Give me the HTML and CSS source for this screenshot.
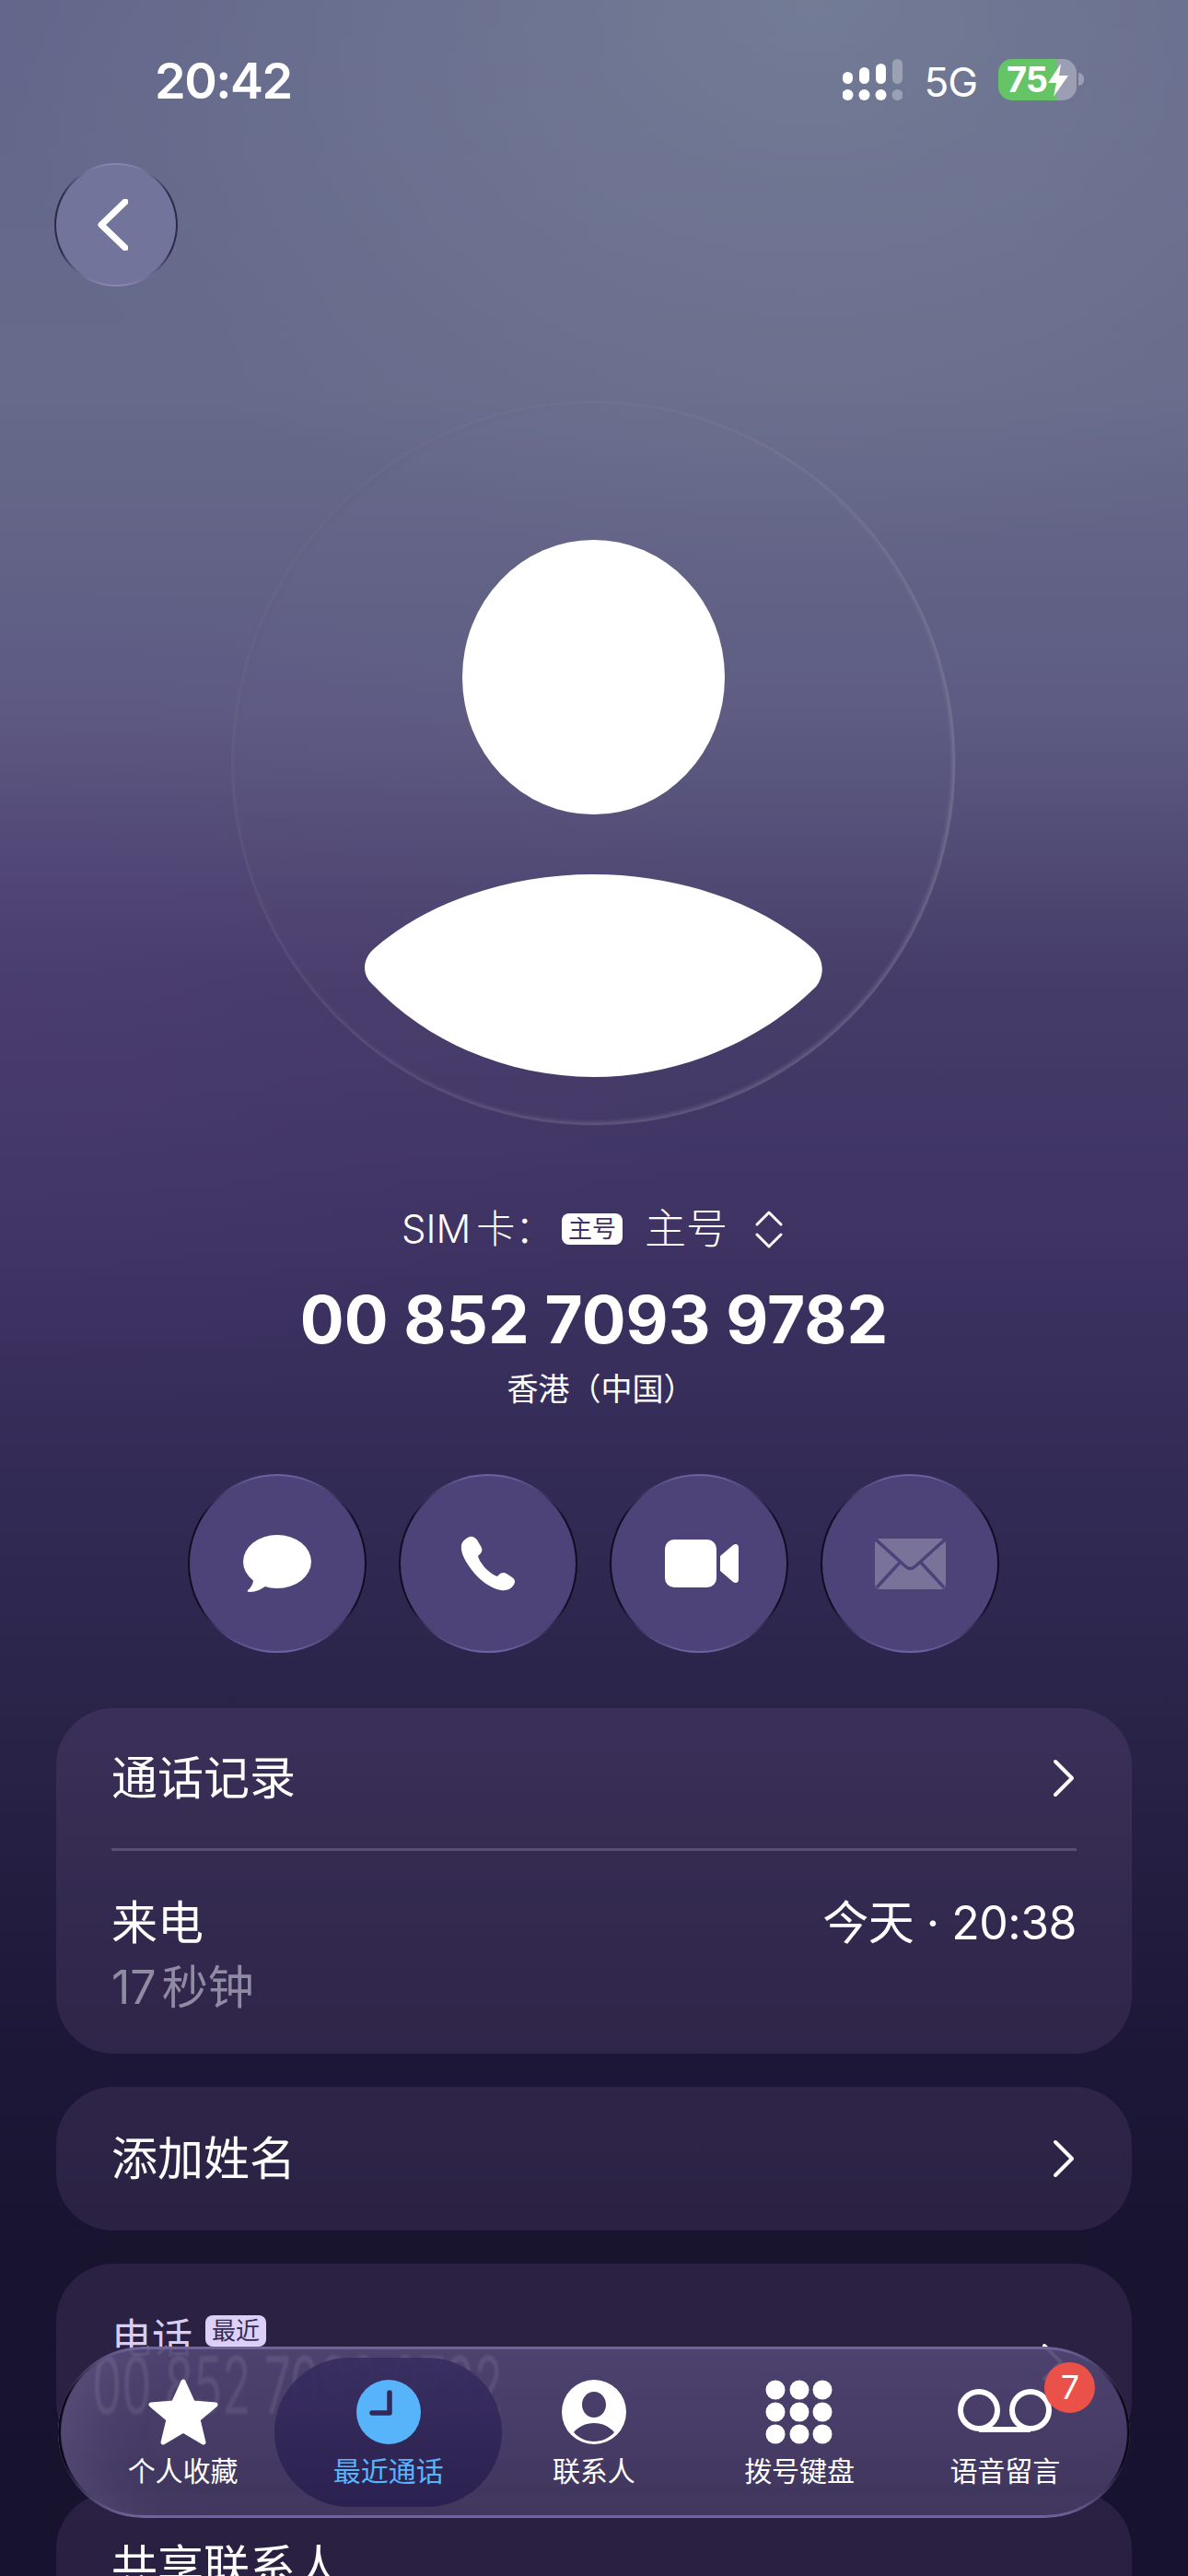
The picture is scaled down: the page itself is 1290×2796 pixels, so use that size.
FILE: index.html
```html
<!DOCTYPE html>
<html lang="zh-CN">
<head>
    <meta charset="UTF-8">
    <meta name="viewport" content="width=device-width, initial-scale=1.0">
    <title>Recent call</title>
    <link rel="stylesheet" href="styles.css">
</head>
<body>
<div class="status-bar">
    <div class="status-time">20:42</div>
    <div class="status-right">
        <svg class="signal" width="65" height="45" viewBox="0 0 65 45">
            <g fill="#fff">
                <rect x="0" y="14" width="11" height="13" rx="5.5"/>
                <rect x="18" y="9" width="11" height="18" rx="5.5"/>
                <rect x="36" y="5" width="11" height="22" rx="5.5"/>
                <circle cx="5.5" cy="39" r="6"/>
                <circle cx="23.5" cy="39" r="6"/>
                <circle cx="41.5" cy="39" r="6"/>
            </g>
            <g fill="#fff" fill-opacity=".3">
                <rect x="54" y="0" width="11" height="27" rx="5.5"/>
                <circle cx="59.5" cy="39" r="6"/>
            </g>
        </svg>
        <div class="status-net">5G</div>
        <div class="battery">
            <span class="battery-num">75</span>
            <svg class="bolt" width="22" height="36" viewBox="0 0 22 36">
                <path d="M14 0 L0 21 H9 L6 36 L22 13 H12 Z" fill="#fff"/>
            </svg>
        </div>
        <div class="battery-nub"></div>
    </div>
</div>

<button class="back-button">
    <svg width="33" height="56" viewBox="0 0 33 56">
        <path d="M30 3 L4 28 L30 53" fill="none" stroke="#fff" stroke-width="7" stroke-linecap="round" stroke-linejoin="round"/>
    </svg>
</button>

<div class="avatar">
    <svg width="785" height="785" viewBox="0 0 785 785">
        <ellipse cx="392.5" cy="299" rx="142.5" ry="149" fill="#fff"/>
        <path d="M155 593 C215 541 305 513 392 513 C480 513 570 541 630 593 C643 604 644 623 634 635 C570 698 480 733 392 733 C304 733 214 698 152 632 C140 620 142 604 155 593 Z" fill="#fff"/>
    </svg>
</div>

<div class="sim-row">
    <span class="sim-label">SIM 卡：</span>
    <span class="sim-badge">主号</span>
    <span class="sim-name">主号</span>
    <svg class="sim-arrows" width="30" height="41" viewBox="0 0 30 41">
        <path d="M2 15 L15 2 L28 15 M2 26 L15 39 L28 26" fill="none" stroke="#fff" stroke-width="3" stroke-linecap="round" stroke-linejoin="round"/>
    </svg>
</div>
<div class="phone-number">00 852 7093 9782</div>
<div class="phone-region">香港（中国）</div>

<div class="actions">
    <button class="action-button">
        <svg width="74" height="62" viewBox="0 0 74 62">
            <ellipse cx="37" cy="29" rx="37" ry="29" fill="#fff"/>
            <path d="M11 44 C12 50 10 56 5 60 C4 61 5 62 7 62 C14 62 20 59 25 55 Z" fill="#fff"/>
        </svg>
    </button>
    <button class="action-button">
        <svg width="60" height="60" viewBox="0 0 60 60">
            <path d="M10 1 C13 0 17 2 19 6 L23 13 C24 16 23 18 21 20 L19 22 C20 26 24 32 28 36 C32 40 37 43 40 44 L42 42 C44 40 47 39 50 41 L56 45 C59 47 60 50 58 53 C55 58 50 60 44 59 C32 57 21 48 13 38 C6 29 0 19 1 11 C1 7 5 3 10 1 Z" fill="#fff"/>
        </svg>
    </button>
    <button class="action-button">
        <svg class="video-icon" width="80" height="52" viewBox="0 0 80 52">
            <rect x="0" y="0" width="56" height="52" rx="10" fill="#fff"/>
            <path d="M60 18 L74 6 C77 4 80 5 80 9 V43 C80 47 77 48 74 46 L60 34 Z" fill="#fff"/>
        </svg>
    </button>
    <button class="action-button">
        <svg width="77" height="55" viewBox="0 0 77 55">
            <rect width="77" height="55" rx="5" fill="#7a7399"/>
            <path d="M1 1 L33 30 Q38.500 35 44 30 L76 1 M27 26 L2 53 M50 26 L75 53" fill="none" stroke="#4b4279" stroke-width="3.500"/>
        </svg>
    </button>
</div>

<div class="card card-log">
    <div class="row row-head">
        <span>通话记录</span>
        <svg class="chevron" width="24" height="42" viewBox="0 0 24 42"><path d="M3 3 L21 21 L3 39" fill="none" stroke="#fff" stroke-width="4" stroke-linecap="round" stroke-linejoin="round"/></svg>
    </div>
    <div class="divider"></div>
    <div class="call-row">
        <div>
            <div class="call-type">来电</div>
            <div class="call-length">17 秒钟</div>
        </div>
        <div class="call-time">今天 · 20:38</div>
    </div>
</div>

<div class="card card-name">
    <span>添加姓名</span>
    <svg class="chevron" width="24" height="42" viewBox="0 0 24 42"><path d="M3 3 L21 21 L3 39" fill="none" stroke="#fff" stroke-width="4" stroke-linecap="round" stroke-linejoin="round"/></svg>
</div>

<div class="card card-phone">
    <div class="phone-label">
        <span class="phone-label-text">电话</span>
        <span class="recent-badge">最近</span>
    </div>
    <svg class="chevron chevron-under" width="24" height="42" viewBox="0 0 24 42"><path d="M3 3 L21 21 L3 39" fill="none" stroke="#fff" stroke-width="4" stroke-linecap="round" stroke-linejoin="round"/></svg>
</div>

<div class="card card-share">共享联系人</div>

<nav class="tab-bar">
    <div class="tab-ghost">00 852 7093 9782</div>
    <div class="tab">
        <svg width="76" height="74" viewBox="0 0 76 74">
            <path d="M38 4 L48.500 27 L73 29 L54 45 L60 70 L38 57 L16 70 L22 45 L3 29 L27.500 27 Z" fill="#fff" stroke="#fff" stroke-width="5" stroke-linejoin="round"/>
        </svg>
        <span>个人收藏</span>
    </div>
    <div class="tab tab-active">
        <svg width="70" height="74" viewBox="0 0 70 74">
            <circle cx="35" cy="37" r="35" fill="#57b4fb"/>
            <path d="M36 16 V38 H17" fill="none" stroke="#322859" stroke-width="5.500" stroke-linecap="round" stroke-linejoin="round"/>
        </svg>
        <span>最近通话</span>
    </div>
    <div class="tab">
        <svg width="70" height="74" viewBox="0 0 70 74">
            <path fill-rule="evenodd" fill="#fff" d="M35 2 A35 35 0 1 1 35 72 A35 35 0 1 1 35 2 Z M35 15 C27 15 22 22 22 29 C22 37 28 43 35 43 C42 43 48 37 48 29 C48 22 43 15 35 15 Z M35 49 C26 49 18 53 13 59 C18 65 26 69 35 69 C44 69 52 65 57 59 C52 53 44 49 35 49 Z"/>
        </svg>
        <span>联系人</span>
    </div>
    <div class="tab">
        <svg width="74" height="74" viewBox="0 0 74 74">
            <g fill="#fff">
                <circle cx="11" cy="13" r="10.500"/><circle cx="37" cy="13" r="10.500"/><circle cx="62" cy="13" r="10.500"/>
                <circle cx="11" cy="37" r="10.500"/><circle cx="37" cy="37" r="10.500"/><circle cx="62" cy="37" r="10.500"/>
                <circle cx="11" cy="61" r="10.500"/><circle cx="37" cy="61" r="10.500"/><circle cx="62" cy="61" r="10.500"/>
            </g>
        </svg>
        <span>拨号键盘</span>
    </div>
    <div class="tab">
        <div class="voicemail-icon">
            <svg width="104" height="74" viewBox="0 0 104 74">
                <path d="M24 56 H80" stroke="#fff" stroke-width="6" fill="none"/>
                <circle cx="24" cy="35" r="20" fill="none" stroke="#fff" stroke-width="6"/>
                <circle cx="80" cy="35" r="20" fill="none" stroke="#fff" stroke-width="6"/>
            </svg>
            <span class="tab-badge">7</span>
        </div>
        <span>语音留言</span>
    </div>
</nav>
</body>
</html>
```

FILE: styles.css
```css
* {
    box-sizing: border-box;
}

body {
    position: relative;
    width: 1290px;
    height: 2796px;
    margin: 0;
    overflow: hidden;
    color: #fff;
    font-family: Inter, "Noto Sans CJK SC", sans-serif;
    background:
        radial-gradient(ellipse 900px 620px at 880px 0, rgba(128, 140, 158, .55), rgba(128, 140, 158, 0)),
        radial-gradient(ellipse 800px 460px at 0 1080px, rgba(90, 60, 130, .24), rgba(90, 60, 130, 0)),
        linear-gradient(180deg, #62668a 0, #676a8a 420px, #5d5b82 780px, #453c69 1060px, #3e3363 1340px, #312a54 1640px, #2a2449 1850px, #1c1737 2240px, #181430 2440px, #17122e 2796px);
}

button {
    padding: 0;
    color: inherit;
    cursor: pointer;
}

/* status bar */
.status-bar {
    display: flex;
    justify-content: space-between;
    height: 177px;
    padding: 59px 113px 0 168px;
}

.status-time {
    font-size: 54px;
    font-weight: 600;
    line-height: 58px;
    letter-spacing: -1.5px;
}

.status-right {
    display: flex;
    align-items: flex-start;
    height: 45px;
    margin-top: 5px;
}

.signal {
    margin-right: 23px;
}

.status-net {
    margin-right: 23px;
    font-size: 44px;
    line-height: 50px;
    letter-spacing: -1px;
}

.battery {
    display: flex;
    align-items: center;
    width: 85px;
    height: 45px;
    padding-left: 9px;
    border-radius: 15px;
    background: linear-gradient(90deg, #65c466 0, #65c466 75%, #9c9eb3 75%, #9c9eb3 100%);
}

.battery-num {
    font-size: 38px;
    font-weight: 700;
    line-height: 45px;
    letter-spacing: -1px;
}

.bolt {
    margin-left: 1px;
}

.battery-nub {
    width: 6px;
    height: 14px;
    margin: 15px 0 0 2px;
    border-radius: 0 6px 6px 0;
    background: #9c9eb3;
}

.back-button {
    display: flex;
    align-items: center;
    justify-content: center;
    width: 134px;
    height: 134px;
    margin-left: 59px;
    padding-right: 8px;
    border: 2px solid transparent;
    border-radius: 50%;
    background:
        linear-gradient(#73749c, #73749c) padding-box,
        linear-gradient(180deg, #8d89b6 0, #2d2a48 25%, #2d2a48 72%, #8d89b6 100%) border-box;
}

/* avatar */
.avatar {
    width: 785px;
    height: 785px;
    margin: 125px auto 0 252px;
    border-radius: 50%;
    background: rgba(255, 255, 255, .012);
    box-shadow:
        0 0 0 1px rgba(255, 255, 255, .04),
        inset 0 0 10px rgba(255, 255, 255, .07),
        inset -2px -2px 5px rgba(255, 255, 255, .18),
        inset 3px 3px 4px rgba(70, 70, 100, .12);
}

.avatar svg {
    display: block;
}

/* sim and number */
.sim-row {
    display: flex;
    align-items: center;
    height: 50px;
    margin: 88px 0 0 436px;
}

.sim-label {
    width: 174px;
    font-size: 42px;
    font-weight: 300;
    line-height: 50px;
    white-space: nowrap;
    word-spacing: -6px;
}

.sim-badge {
    width: 66px;
    height: 34px;
    border-radius: 8px;
    background: #fff;
    color: #3f3461;
    font-size: 26px;
    line-height: 34px;
    text-align: center;
}

.sim-name {
    margin-left: 24px;
    font-size: 45px;
    font-weight: 300;
    line-height: 50px;
}

.sim-arrows {
    margin-left: 30px;
}

.phone-number {
    margin-top: 29px;
    font-size: 71px;
    font-weight: 700;
    line-height: 88px;
    text-align: center;
    white-space: nowrap;
}

.phone-region {
    margin-top: 7px;
    padding-left: 15px;
    font-size: 34px;
    line-height: 50px;
    text-align: center;
}

.actions {
    display: flex;
    gap: 35px;
    margin: 67px 0 0 204px;
}

.action-button {
    display: flex;
    align-items: center;
    justify-content: center;
    width: 194px;
    height: 194px;
    border: 2px solid transparent;
    border-radius: 50%;
    background:
        linear-gradient(#4e4378, #4e4378) padding-box,
        linear-gradient(180deg, #6f64a6 0, #100d22 24%, #100d22 74%, #6f64a6 100%) border-box;
}

.video-icon {
    margin-left: 5px;
}

/* cards */
.card {
    width: 1168px;
    margin-left: 61px;
    border-radius: 62px;
    background: rgba(175, 136, 198, .125);
    font-size: 50px;
    line-height: 60px;
}

.card-log {
    height: 375px;
    margin-top: 60px;
    padding: 0 60px;
}

.row-head {
    display: flex;
    align-items: center;
    justify-content: space-between;
    height: 152px;
}

.divider {
    height: 3px;
    background: #574e74;
}

.call-row {
    display: flex;
    justify-content: space-between;
    padding-top: 46px;
}

.call-type {
    line-height: 64px;
}

.call-length {
    margin-top: 8px;
    color: #8f8ba3;
    line-height: 60px;
    word-spacing: -8px;
}

.call-time {
    line-height: 64px;
    letter-spacing: -.5px;
}

.chevron {
    flex: none;
    margin-right: 2px;
}

.card-name {
    display: flex;
    align-items: center;
    justify-content: space-between;
    height: 156px;
    margin-top: 36px;
    padding: 0 60px;
}

.card-phone {
    position: relative;
    height: 212px;
    margin-top: 36px;
    padding: 52px 60px 0;
    overflow: hidden;
}

.phone-label {
    display: flex;
    align-items: flex-start;
    gap: 14px;
    height: 50px;
}

.phone-label-text {
    margin-top: 4px;
    color: #d9cdf2;
    font-size: 44px;
    line-height: 50px;
}

.recent-badge {
    width: 66px;
    height: 34px;
    margin-top: 4px;
    border-radius: 8px;
    background: #dcd0f8;
    color: #352b55;
    font-size: 26px;
    line-height: 34px;
    text-align: center;
}

.chevron-under {
    position: absolute;
    top: 86px;
    right: 72px;
}

.card-share {
    height: 200px;
    margin-top: 36px;
    padding: 51px 60px 0;
}

/* tab bar */
.tab-bar {
    position: absolute;
    right: 63px;
    bottom: 63px;
    left: 63px;
    display: flex;
    height: 186px;
    padding: 13px 24px;
    overflow: hidden;
    border-radius: 93px;
    background: linear-gradient(180deg, rgba(80, 69, 115, .92), rgba(66, 56, 96, .92));
    box-shadow: inset 60px 0 70px -40px rgba(140, 125, 170, .28);
}

/* glass rim: light on the long edges, dark round the ends */
.tab-bar::after {
    content: "";
    position: absolute;
    inset: 0;
    padding: 3px;
    border-radius: 93px;
    background: linear-gradient(180deg, #71669e 0, #0d0a1a 30%, #0d0a1a 68%, #71669e 100%);
    -webkit-mask: linear-gradient(#000 0 0) content-box, linear-gradient(#000 0 0);
    -webkit-mask-composite: xor;
    mask-composite: exclude;
    pointer-events: none;
}

/* the number of the card below, bent by the glass */
.tab-ghost {
    position: absolute;
    top: -9px;
    left: 37px;
    color: rgba(255, 255, 255, .09);
    font-size: 51px;
    line-height: 60px;
    white-space: nowrap;
    transform: scaleY(1.7);
    transform-origin: left top;
    filter: blur(1px);
}

.tab {
    position: relative;
    display: flex;
    flex: 1;
    flex-direction: column;
    align-items: center;
    padding-top: 21px;
    font-size: 30px;
    line-height: 36px;
}

.tab svg {
    display: block;
    margin-bottom: 9px;
}

.tab-active {
    flex: none;
    width: 247px;
    margin: -1px -12px;
    border-radius: 81px;
    background: linear-gradient(180deg, rgba(56, 45, 96, .92), rgba(42, 33, 80, .98));
    color: #57b4fb;
    padding-top: 22px;
}

.voicemail-icon {
    position: relative;
    height: 83px;
}

.tab-badge {
    position: absolute;
    top: -17px;
    right: -46px;
    width: 55px;
    height: 55px;
    border-radius: 50%;
    background: #ea5149;
    color: #fff;
    font-size: 36px;
    line-height: 55px;
    text-align: center;
}
```
